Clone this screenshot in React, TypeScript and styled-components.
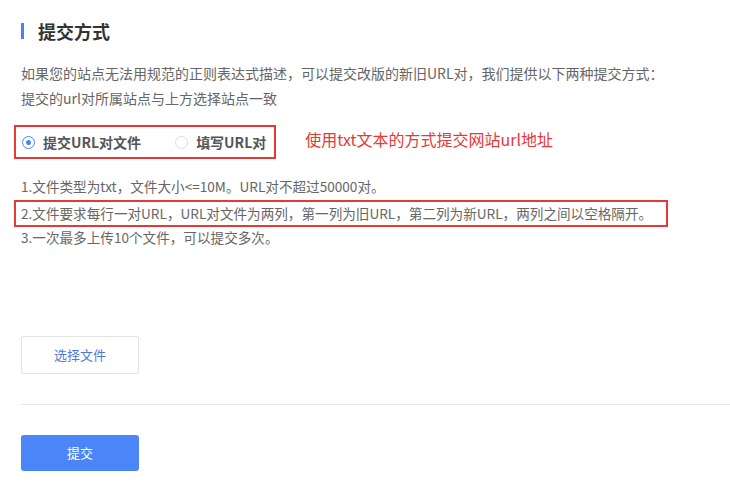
import styled, { createGlobalStyle } from "styled-components";

const GlobalStyle = createGlobalStyle`
  body {
    margin: 0;
    background: #fff;
    font-family: "Noto Sans CJK SC", "Noto Sans", sans-serif;
    color: #666;
  }
`;

const Page = styled.div`
  padding: 21px 0 0 21px;
  width: 709px;
`;

const Title = styled.h2`
  margin: 0;
  height: 20px;
  display: flex;
  align-items: center;
  gap: 14px;
  font-size: 18px;
  font-weight: 700;
  color: #333;
  line-height: 20px;

  &::before {
    content: "";
    width: 3px;
    height: 16px;
    background: #4285f4;
  }
`;

const Desc = styled.p`
  margin: 20px 0 0;
  font-size: 14px;
  line-height: 25px;
`;

const ChoiceRow = styled.div`
  margin-top: 14px;
  display: flex;
  align-items: center;
`;

const RadioGroup = styled.div`
  margin-left: -7px;
  height: 30px;
  padding: 0 8px 0 6px;
  border: 2px solid #e53935;
  display: flex;
  align-items: center;
  gap: 34px;
`;

const RadioLabel = styled.label`
  display: flex;
  align-items: center;
  gap: 8px;
  font-size: 14px;
  font-weight: 700;
  color: #555;
`;

const RadioDot = styled.span<{ $checked: boolean }>`
  width: 13px;
  height: 13px;
  box-sizing: border-box;
  border-radius: 50%;
  border: 1px solid ${p => (p.$checked ? "#4a86f7" : "#dcdcdc")};
  display: flex;
  align-items: center;
  justify-content: center;

  &::after {
    content: "";
    width: 5px;
    height: 5px;
    border-radius: 50%;
    background: ${p => (p.$checked ? "#4a86f7" : "transparent")};
  }
`;

const Note = styled.span`
  margin-left: 29px;
  margin-top: -6px;
  font-size: 16px;
  color: #e53935;
`;

const Rules = styled.ol`
  list-style: none;
  margin: 15px 0 0;
  padding: 0;
  font-size: 13.6px;
  line-height: 25.5px;
`;

const Rule = styled.li<{ $marked?: boolean }>`
  width: fit-content;
  ${p =>
    p.$marked &&
    `
    margin-left: -5px;
    padding: 0 14px 0 5px;
    outline: 2px solid #e53935;
    line-height: 23px;
    margin-top: 2px;
    margin-bottom: 0.5px;
  `}
`;

const FileButton = styled.button`
  margin-top: 85px;
  width: 118px;
  height: 38px;
  background: #fff;
  border: 1px solid #e3e3e3;
  border-radius: 2px;
  font-family: inherit;
  font-size: 13px;
  color: #4f78dc;
  cursor: pointer;
`;

const Divider = styled.hr`
  margin: 30px 0 0;
  border: 0;
  border-top: 1px solid #e6e6e6;
`;

const SubmitButton = styled.button`
  margin-top: 30px;
  width: 118px;
  height: 36px;
  background: #4a86f7;
  border: 0;
  border-radius: 3px;
  font-family: inherit;
  font-size: 13px;
  color: #fff;
  cursor: pointer;
`;

export default function App() {
  return (
    <Page>
      <GlobalStyle />
      <Title>提交方式</Title>
      <Desc>
        如果您的站点无法用规范的正则表达式描述，可以提交改版的新旧URL对，我们提供以下两种提交方式：
        <br />
        提交的url对所属站点与上方选择站点一致
      </Desc>
      <ChoiceRow>
        <RadioGroup>
          <RadioLabel>
            <RadioDot $checked />
            提交URL对文件
          </RadioLabel>
          <RadioLabel>
            <RadioDot $checked={false} />
            填写URL对
          </RadioLabel>
        </RadioGroup>
        <Note>使用txt文本的方式提交网站url地址</Note>
      </ChoiceRow>
      <Rules>
        <Rule>1.文件类型为txt，文件大小&lt;=10M。URL对不超过50000对。</Rule>
        <Rule $marked>
          2.文件要求每行一对URL，URL对文件为两列，第一列为旧URL，第二列为新URL，两列之间以空格隔开。
        </Rule>
        <Rule>3.一次最多上传10个文件，可以提交多次。</Rule>
      </Rules>
      <FileButton>选择文件</FileButton>
      <Divider />
      <SubmitButton>提交</SubmitButton>
    </Page>
  );
}
